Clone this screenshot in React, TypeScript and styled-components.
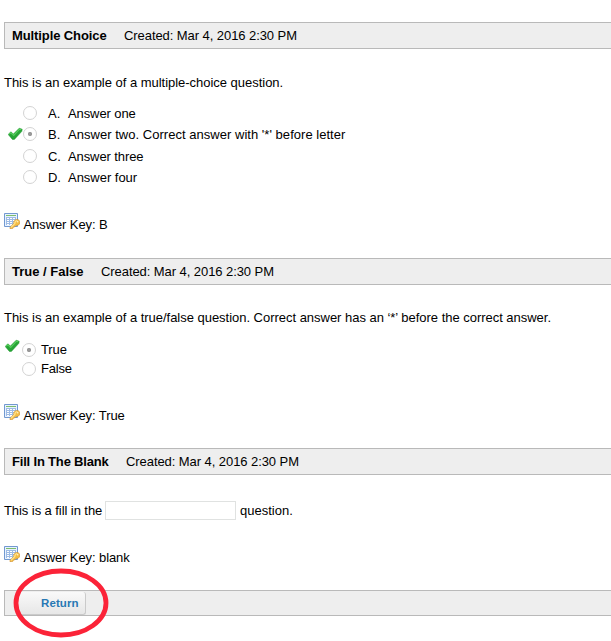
import React from "react";
import styled, { createGlobalStyle } from "styled-components";

const GlobalStyle = createGlobalStyle`
  body {
    margin: 0;
    background: #fff;
    color: #000;
    font: 13px/15px "Liberation Sans", Arial, sans-serif;
    overflow: hidden;
  }
  * { box-sizing: border-box; }
`;

const Page = styled.main`
  position: relative;
  height: 641px;
  padding: 22px 0 0 4px;
  overflow: hidden;
`;

const Section = styled.section<{ $height: number }>`
  height: ${(p) => p.$height}px;
`;

const Bar = styled.header`
  display: flex;
  gap: 17px;
  height: 27px;
  padding: 5px 0 0 7px;
  background: #eee;
  border: 1px solid #b9b9b9;
  border-right: 0;
`;

const Text = styled.span<{ $width?: number; $track?: number; $lift?: number }>`
  flex: none;
  width: ${(p) => (p.$width ? `${p.$width}px` : "auto")};
  margin-top: ${(p) => -(p.$lift ?? 0)}px;
  letter-spacing: ${(p) => p.$track ?? -0.025}px;
  white-space: nowrap;
`;

const Kind = styled(Text)`
  font-weight: bold;
`;

const Question = styled.div<{ $top: number }>`
  display: flex;
  height: 15px;
  margin-top: ${(p) => p.$top}px;
`;

const Choices = styled.div<{ $top: number }>`
  display: flex;
  flex-direction: column;
  margin-top: ${(p) => p.$top}px;
`;

const Choice = styled.label<{ $height: number; $indent: number }>`
  display: flex;
  align-items: flex-start;
  height: ${(p) => p.$height}px;
  padding-left: ${(p) => p.$indent}px;
`;

const MarkSlot = styled.span<{ $width: number; $shift?: number }>`
  flex: none;
  width: ${(p) => p.$width}px;
  height: 15px;
  margin-top: ${(p) => p.$shift ?? 0}px;
`;

const Radio = styled.span<{ $checked?: boolean; $gap: number }>`
  flex: none;
  width: 14px;
  height: 14px;
  margin-right: ${(p) => p.$gap}px;
  border: 1px solid #d3d3d3;
  border-radius: 50%;
  background: ${(p) =>
    p.$checked ? "radial-gradient(circle, #999 0 1.7px, #fff 2.5px)" : "#fff"};
`;

const AnswerKey = styled.div<{ $top: number }>`
  display: flex;
  gap: 3.5px;
  height: 19px;
  margin-top: ${(p) => p.$top}px;

  svg { flex: none; }
  span { padding-top: 4px; }
`;

const Blank = styled.input`
  flex: none;
  width: 131px;
  height: 19px;
  margin: -2px 4px 0 3px;
  padding: 0 3px;
  border: 1px solid #e0e2e1;
  border-radius: 0;
  background: #fff;
`;

const Footer = styled.footer`
  display: flex;
  height: 26px;
  padding: 1px 0 0 12px;
  background: #eee;
  border: 1px solid #b9b9b9;
  border-right: 0;
`;

const ReturnButton = styled.button`
  width: 69px;
  height: 23px;
  padding: 1px 0 0 24px;
  border: 0;
  border-right: 1px solid #cacaca;
  border-bottom: 1px solid #cacaca;
  border-radius: 3px;
  background: linear-gradient(#f9f9f9, #e7e7e7);
  color: #2878b4;
  font: bold 11.5px/15px "Liberation Sans", Arial, sans-serif;
  text-align: left;
  letter-spacing: 0.1px;
`;

const Highlight = styled.svg`
  position: absolute;
  left: 13px;
  top: 568px;
  pointer-events: none;
`;

const Check = () => (
  <svg width="15" height="14" viewBox="0 0 15 14">
    <path d="M.2 7.5 2.8 4.8 5.4 7 11.2 1.2 14.2 2.2 13.9 4.3 6.4 12.4 4.4 12.4Z" fill="#27a536" stroke="#1d942d" strokeWidth=".5" strokeLinejoin="round" />
    <path d="m1.2 7.1 1.7-1.3 2.8 2.5 5.8-6.1 1.8.6" fill="none" stroke="#56cd5c" strokeWidth="1.2" />
  </svg>
);

const KeyIcon = () => (
  <svg width="16" height="16" viewBox="0 0 16 16">
    <path d="M.5.5h13v13H.5z" fill="#e8f2ff" stroke="#7299d0" />
    <path d="M2 2.5h10" stroke="#7cbd6d" />
    <path d="M2 4h10v8H2z" fill="#9dbbe4" />
    <path d="M3 5.5h2m1 0h2m1 0h2M3 7.5h2m1 0h2m1 0h2M3 9.5h2m1 0h2m1 0h2M3 11.5h2m1 0h2" stroke="#fff" />
    <path d="m6 14.4 3.7-4c-.3-2.2 1.3-4 3.4-3.9 2 .1 3 1.7 2.7 3.3-.3 2-2 3.1-4 2.8l-1 1.2-1.2.3-1 1.5-2.6.2Z" fill="#f4bd43" stroke="#cc8c2c" strokeWidth=".6" />
    <path d="m7 14.4 3.8-4c0-1.7 1-2.8 2.5-2.8" fill="none" stroke="#ffe38e" strokeWidth="1.2" />
    <circle cx="13.7" cy="8.7" r=".7" fill="#fff5d9" />
  </svg>
);

function Heading({ kind, width, track }: { kind: string; width: number; track: number }) {
  return (
    <Bar>
      <Kind $width={width} $track={track}>{kind}</Kind>
      <Text $track={-0.07}>Created: Mar 4, 2016 2:30 PM</Text>
    </Bar>
  );
}

function Key({ value, top }: { value: string; top: number }) {
  return (
    <AnswerKey $top={top}>
      <KeyIcon />
      <Text $track={-0.09}>Answer Key: {value}</Text>
    </AnswerKey>
  );
}

const answers = [
  { letter: "A.", text: "Answer one", height: 21, track: -0.1 },
  { letter: "B.", text: "Answer two. Correct answer with '*' before letter", height: 22, track: 0.03, correct: true },
  { letter: "C.", text: "Answer three", height: 21, track: -0.1 },
  { letter: "D.", text: "Answer four", height: 21, track: -0.02 },
];

export default function App() {
  return (
    <>
      <GlobalStyle />
      <Page>
        <Section $height={236}>
          <Heading kind="Multiple Choice" width={95} track={-0.1} />
          <Question $top={26}>
            <Text>This is an example of a multiple-choice question.</Text>
          </Question>
          <Choices $top={16}>
            {answers.map((a) => (
              <Choice key={a.letter} $height={a.height} $indent={4}>
                <MarkSlot $width={15}>{a.correct && <Check />}</MarkSlot>
                <Radio $checked={a.correct} $gap={11} />
                <Text $width={20}>{a.letter}</Text>
                <Text $track={a.track}>{a.text}</Text>
              </Choice>
            ))}
          </Choices>
          <Key value="B" top={22} />
        </Section>
        <Section $height={190}>
          <Heading kind="True / False" width={72} track={0} />
          <Question $top={25}>
            <Text>This is an example of a true/false question. Correct answer has an ‘*’ before the correct answer.</Text>
          </Question>
          <Choices $top={18}>
            <Choice $height={19} $indent={1}>
              <MarkSlot $width={17} $shift={-4}><Check /></MarkSlot>
              <Radio $checked $gap={5} />
              <Text $lift={1} $track={-0.1}>True</Text>
            </Choice>
            <Choice $height={19} $indent={1}>
              <MarkSlot $width={17} />
              <Radio $gap={5} />
              <Text $lift={1} $track={-0.2}>False</Text>
            </Choice>
          </Choices>
          <Key value="True" top={23} />
        </Section>
        <Section $height={142}>
          <Heading kind="Fill In The Blank" width={97} track={-0.18} />
          <Question $top={28}>
            <Text $width={98} $track={-0.07}>This is a fill in the</Text>
            <Blank aria-label="Blank answer" />
            <Text $track={0}>question.</Text>
          </Question>
          <Key value="blank" top={28} />
        </Section>
        <Footer>
          <ReturnButton type="button">Return</ReturnButton>
        </Footer>
        <Highlight width="97" height="70" viewBox="0 0 97 70" aria-hidden="true">
          <ellipse cx="48" cy="35" rx="45" ry="32" fill="none" stroke="#fb2338" strokeWidth="4.8" />
        </Highlight>
      </Page>
    </>
  );
}
